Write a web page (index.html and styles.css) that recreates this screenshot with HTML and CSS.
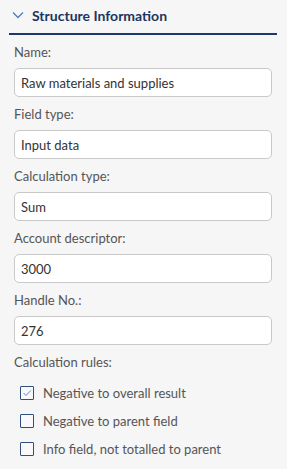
FILE: index.html
```html
<!DOCTYPE html>
<html lang="en">
<head>
    <meta charset="UTF-8">
    <meta name="viewport" content="width=device-width, initial-scale=1.0">
    <title>Structure Information</title>
    <link rel="stylesheet" href="styles.css">
</head>
<body>
    <div class="panel-header">
        <svg class="chevron" width="12" height="8" viewBox="0 0 12 8">
            <path d="M1 1.5 L6 6.5 L11 1.5" fill="none" stroke="#4f7fbf" stroke-width="1.3"/>
        </svg>
        <span>Structure Information</span>
    </div>

    <div class="form">
        <label class="field-label">Name:</label>
        <input class="field-input" type="text" value="Raw materials and supplies">

        <label class="field-label">Field type:</label>
        <input class="field-input" type="text" value="Input data">

        <label class="field-label">Calculation type:</label>
        <input class="field-input" type="text" value="Sum">

        <label class="field-label">Account descriptor:</label>
        <input class="field-input" type="text" value="3000">

        <label class="field-label">Handle No.:</label>
        <input class="field-input" type="text" value="276">

        <label class="field-label">Calculation rules:</label>
        <div class="rules">
            <div class="rule">
                <span class="box checked">
                    <svg width="10" height="8" viewBox="0 0 10 8">
                        <path d="M1.5 4 L4 6.5 L8.8 1.5" fill="none" stroke="#5d86c4" stroke-width="1"/>
                    </svg>
                </span>
                Negative to overall result
            </div>
            <div class="rule">
                <span class="box"></span>
                Negative to parent field
            </div>
            <div class="rule">
                <span class="box"></span>
                Info field, not totalled to parent
            </div>
        </div>
    </div>
</body>
</html>
```

FILE: styles.css
```css
/* General */
body {
    margin: 0;
    background: #f6f6f6;
    font-family: Lato, "Open Sans", sans-serif;
    color: #555;
}

/* Header */
.panel-header {
    display: flex;
    align-items: center;
    height: 35px;
    margin: 0 10px 0 9px;
    padding: 0 0 3px 3px;
    border-bottom: 2px solid #1b3a6c;
    box-sizing: border-box;
}

.chevron {
    margin-right: 8px;
}

.panel-header span {
    font-size: 14px;
    font-weight: bold;
    color: #1c355f;
}

/* Form */
.form {
    display: flex;
    flex-direction: column;
    padding: 0 15px 0 14px;
}

.field-label {
    font-size: 13px;
    line-height: 17px;
    margin-top: 9px;
    margin-bottom: 7px;
}

.field-input {
    height: 29px;
    box-sizing: border-box;
    border: 1px solid #c9c9c9;
    border-radius: 5px;
    background: #fff;
    padding: 0 6px;
    font-family: Lato, "Open Sans", sans-serif;
    font-size: 13px;
    color: #333;
}

/* Checkboxes */
.rules {
    display: flex;
    flex-direction: column;
    margin-top: 1px;
}

.rule {
    display: flex;
    align-items: center;
    height: 28px;
    padding-left: 6px;
    font-size: 13px;
    color: #555;
}

.box {
    display: flex;
    align-items: center;
    justify-content: center;
    width: 14px;
    height: 14px;
    box-sizing: border-box;
    border: 1.5px solid #2f4f7f;
    border-radius: 1px;
    background: #f9f9fb;
    margin-right: 9px;
}
```
